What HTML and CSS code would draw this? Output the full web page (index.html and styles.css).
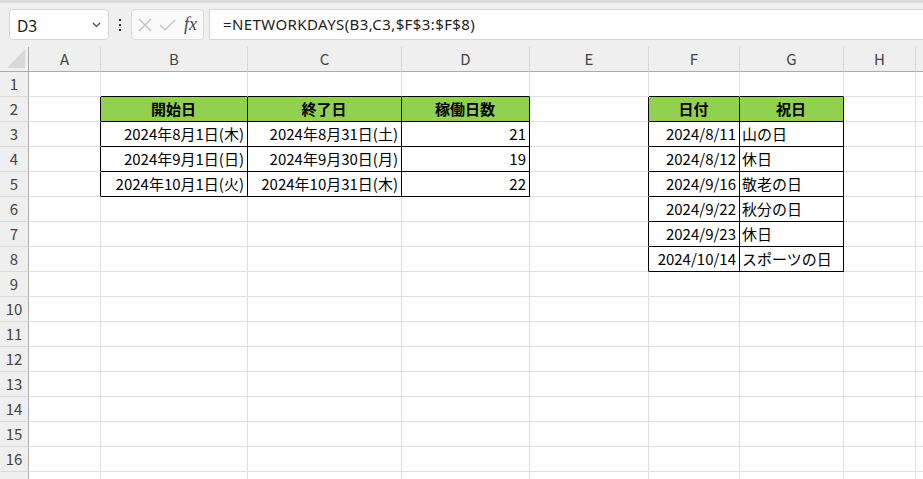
FILE: index.html
```html
<!DOCTYPE html>
<html>

	<head>
		<meta charset="UTF-8">
		<title>NETWORKDAYS</title>
		<link rel="stylesheet" href="styles.css">
	</head>

	<body>
		<div class="app">
			<div class="toolbar">
				<div class="namebox">
					<span>D3</span>
					<svg class="chevron" width="9" height="6" viewBox="0 0 9 6"><path d="M1 1 L4.5 4.5 L8 1" fill="none" stroke="#444" stroke-width="1.2"/></svg>
				</div>
				<div class="dots"><i></i><i></i><i></i></div>
				<div class="fxbox">
					<svg width="14" height="14" viewBox="0 0 14 14"><path d="M1 1 L13 13 M13 1 L1 13" stroke="#bdbdbd" stroke-width="1.2"/></svg>
					<svg width="17" height="12" viewBox="0 0 17 12"><path d="M1 6 L6 11 L16 1" fill="none" stroke="#bdbdbd" stroke-width="1.2"/></svg>
					<span class="fx">fx</span>
				</div>
				<div class="formula">=NETWORKDAYS(B3,C3,$F$3:$F$8)</div>
			</div>
			<div class="sheet">
				<table>
					<colgroup>
						<col class="c-hd">
						<col class="c-a">
						<col class="c-b">
						<col class="c-c">
						<col class="c-d">
						<col class="c-e">
						<col class="c-f">
						<col class="c-g">
						<col class="c-h">
						<col class="c-i">
					</colgroup>
					<tr class="colhead">
						<th class="corner"><svg width="18" height="19" viewBox="0 0 18 19"><path d="M18 0 L18 19 L0 19 Z" fill="#d8d8d8"/></svg></th>
						<th>A</th><th>B</th><th>C</th><th>D</th><th>E</th><th>F</th><th>G</th><th>H</th><th></th>
					</tr>
					<tr>
						<th>1</th>
						<td></td><td class="bb"></td><td class="bb"></td><td class="bb"></td><td></td><td class="bb"></td><td class="bb"></td><td></td><td></td>
					</tr>
					<tr>
						<th>2</th>
						<td class="br"></td><td class="hd">開始日</td><td class="hd">終了日</td><td class="hd">稼働日数</td>
						<td class="br"></td><td class="hd">日付</td><td class="hd">祝日</td><td></td><td></td>
					</tr>
					<tr>
						<th>3</th>
						<td class="br"></td><td class="dt r">2024年8月1日(木)</td><td class="dt r">2024年8月31日(土)</td><td class="dt r">21</td>
						<td class="br"></td><td class="dt r">2024/8/11</td><td class="dt">山の日</td><td></td><td></td>
					</tr>
					<tr>
						<th>4</th>
						<td class="br"></td><td class="dt r">2024年9月1日(日)</td><td class="dt r">2024年9月30日(月)</td><td class="dt r">19</td>
						<td class="br"></td><td class="dt r">2024/8/12</td><td class="dt">休日</td><td></td><td></td>
					</tr>
					<tr>
						<th>5</th>
						<td class="br"></td><td class="dt r">2024年10月1日(火)</td><td class="dt r">2024年10月31日(木)</td><td class="dt r">22</td>
						<td class="br"></td><td class="dt r">2024/9/16</td><td class="dt">敬老の日</td><td></td><td></td>
					</tr>
					<tr>
						<th>6</th>
						<td></td><td></td><td></td><td></td>
						<td class="br"></td><td class="dt r">2024/9/22</td><td class="dt">秋分の日</td><td></td><td></td>
					</tr>
					<tr>
						<th>7</th>
						<td></td><td></td><td></td><td></td>
						<td class="br"></td><td class="dt r">2024/9/23</td><td class="dt">休日</td><td></td><td></td>
					</tr>
					<tr>
						<th>8</th>
						<td></td><td></td><td></td><td></td>
						<td class="br"></td><td class="dt r">2024/10/14</td><td class="dt">スポーツの日</td><td></td><td></td>
					</tr>
					<tr><th>9</th><td></td><td></td><td></td><td></td><td></td><td></td><td></td><td></td><td></td></tr>
					<tr><th>10</th><td></td><td></td><td></td><td></td><td></td><td></td><td></td><td></td><td></td></tr>
					<tr><th>11</th><td></td><td></td><td></td><td></td><td></td><td></td><td></td><td></td><td></td></tr>
					<tr><th>12</th><td></td><td></td><td></td><td></td><td></td><td></td><td></td><td></td><td></td></tr>
					<tr><th>13</th><td></td><td></td><td></td><td></td><td></td><td></td><td></td><td></td><td></td></tr>
					<tr><th>14</th><td></td><td></td><td></td><td></td><td></td><td></td><td></td><td></td><td></td></tr>
					<tr><th>15</th><td></td><td></td><td></td><td></td><td></td><td></td><td></td><td></td><td></td></tr>
					<tr><th>16</th><td></td><td></td><td></td><td></td><td></td><td></td><td></td><td></td><td></td></tr>
					<tr><th>17</th><td></td><td></td><td></td><td></td><td></td><td></td><td></td><td></td><td></td></tr>
				</table>
			</div>
		</div>
	</body>

</html>
```

FILE: styles.css
```css
* {
	padding: 0;
	margin: 0;
	box-sizing: border-box;
}

body {
	width: 923px;
	height: 479px;
	overflow: hidden;
	background: #fff;
	font-family: "Noto Sans CJK JP", "Noto Sans", sans-serif;
}

.app {
	width: 923px;
	height: 479px;
	overflow: hidden;
	background: #efefef;
}

.toolbar {
	height: 47px;
	display: flex;
	align-items: flex-start;
	padding: 6px 0 0 9px;
	border-top: 3px solid #dcdcdc;
}

.namebox {
	width: 100px;
	height: 31px;
	background: #fff;
	border: 1px solid #d6d6d6;
	border-radius: 4px;
	display: flex;
	align-items: center;
	justify-content: space-between;
	padding: 0 7px 0 7px;
	font-family: "Noto Sans", sans-serif;
	font-size: 15.5px;
	color: #222;
}

.namebox span {
	margin-top: 2px;
}

.dots {
	width: 22px;
	height: 31px;
	display: flex;
	flex-direction: column;
	align-items: center;
	justify-content: center;
	gap: 3px;
}

.dots i {
	display: block;
	width: 2px;
	height: 2px;
	background: #333;
}

.fxbox {
	width: 73px;
	height: 31px;
	background: #fafafa;
	border: 1px solid #dcdcdc;
	border-radius: 4px;
	display: flex;
	align-items: center;
	gap: 7px;
	padding-left: 6px;
}

.fx {
	font-family: "Liberation Serif", serif;
	font-style: italic;
	font-size: 18px;
	color: #444;
	margin-left: 1px;
}

.formula {
	flex: 1;
	height: 31px;
	margin-left: 5px;
	background: #fff;
	border: 1px solid #d6d6d6;
	border-right: none;
	padding-left: 13px;
	line-height: 29px;
	font-family: "Noto Sans", sans-serif;
	font-size: 15px;
	letter-spacing: 0.4px;
	color: #222;
}

.sheet {
	overflow: hidden;
}

table {
	table-layout: fixed;
	border-collapse: separate;
	border-spacing: 0;
	width: 946px;
	font-size: 15px;
}

.c-hd { width: 29px; }
.c-a { width: 72px; }
.c-b { width: 147px; }
.c-c { width: 154px; }
.c-d { width: 128px; }
.c-e { width: 119px; }
.c-f { width: 91px; }
.c-g { width: 104px; }
.c-h { width: 72px; }
.c-i { width: 30px; }

tr {
	height: 25px;
}

td {
	background: #fff;
	border-right: 1px solid #e1e1e1;
	border-bottom: 1px solid #e1e1e1;
	padding: 0 3px 0 2px;
	height: 25px;
	line-height: 24px;
	white-space: nowrap;
	overflow: hidden;
	color: #000;
}

th {
	background: #efefef;
	font-weight: normal;
	color: #444;
	border-right: 1px solid #ababab;
	border-bottom: 1px solid #dadada;
	height: 25px;
	line-height: 24px;
	text-align: center;
}

.colhead th {
	border-right: 1px solid #d8d8d8;
	border-bottom: 1px solid #ababab;
}

.colhead th.corner {
	border-right: 1px solid #ababab;
	text-align: right;
	vertical-align: bottom;
	padding: 0 3px 3px 0;
	line-height: 0;
}

td.r {
	text-align: right;
}

td.br {
	border-right-color: #000;
}

td.bb {
	border-bottom-color: #000;
}

td.hd {
	background: #92d050;
	border-right-color: #000;
	border-bottom-color: #000;
	font-weight: bold;
	text-align: center;
}

td.dt {
	border-right-color: #000;
	border-bottom-color: #000;
}
```
